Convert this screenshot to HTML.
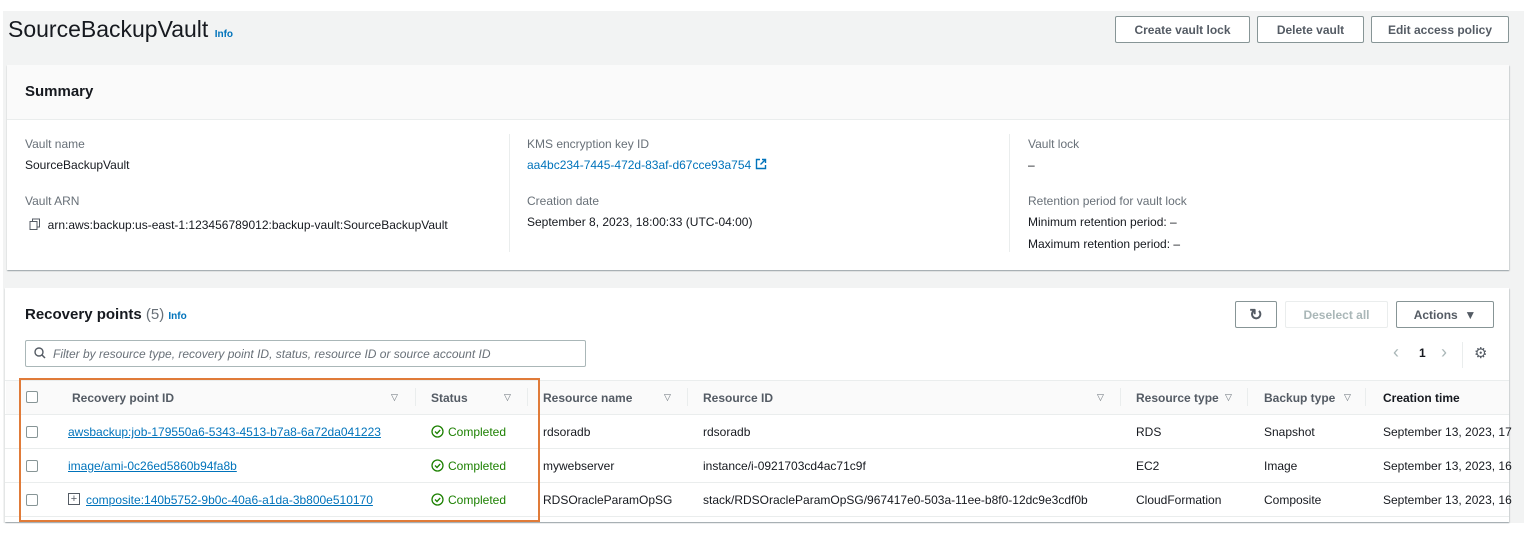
<!DOCTYPE html>
<html><head><meta charset="utf-8"><style>
*{box-sizing:border-box;margin:0;padding:0}
body{width:1524px;height:538px;background:#fff;font-family:"Liberation Sans",sans-serif;color:#16191f;position:relative;overflow:hidden;font-size:12px}
.a{position:absolute;white-space:nowrap}
.bg{position:absolute;left:3px;top:11px;width:1521px;height:512px;background:#f2f3f3}
.card{position:absolute;background:#fff;box-shadow:0 1px 1px rgba(0,28,36,.3),1px 1px 1px rgba(0,28,36,.1)}
.btn{position:absolute;height:27px;border:1px solid #879596;background:#fff;border-radius:2px;font-weight:bold;font-size:12px;color:#545b64;display:flex;align-items:center;justify-content:center}
.lbl{color:#687078;font-size:12px}
.link{color:#0073bb}
.ul{text-decoration:underline}
.th{font-weight:bold;color:#545b64;font-size:12px}
.tri{color:#687078;font-size:9px}
.cb{position:absolute;width:12px;height:12px;border:1px solid #879596;border-radius:2px;background:#fff}
.ok{color:#1d8102}
.row{position:absolute;left:5px;width:1504px;height:1px;background:#eaeded}
.sep{position:absolute;width:1px;height:18px;background:#eaeded}
</style></head><body>
<div class="bg"></div>
<div class="a" style="left:8px;top:16px;font-size:23px;color:#16191f">SourceBackupVault <span class="link" style="font-size:10px;font-weight:bold">Info</span></div>
<div class="btn" style="left:1115px;top:16px;width:135px">Create vault lock</div>
<div class="btn" style="left:1257px;top:16px;width:107px">Delete vault</div>
<div class="btn" style="left:1371px;top:16px;width:138px">Edit access policy</div>

<div class="card" style="left:7px;top:65px;width:1502px;height:205px">
<div style="position:absolute;left:0;top:0;width:100%;height:55px;background:#fafafa;border-bottom:1px solid #eaeded"></div>
<div class="a" style="left:18px;top:18px;font-size:15px;font-weight:bold">Summary</div>
<div style="position:absolute;left:502px;top:69px;width:1px;height:118px;background:#eaeded"></div>
<div style="position:absolute;left:1002px;top:69px;width:1px;height:118px;background:#eaeded"></div>
<div class="a lbl" style="left:18px;top:72px">Vault name</div>
<div class="a" style="left:18px;top:93px">SourceBackupVault</div>
<div class="a lbl" style="left:18px;top:129px">Vault ARN</div>
<div class="a" style="left:22px;top:153px"><svg width="12" height="12" viewBox="0 0 12 12" style="vertical-align:-1px"><rect x="1" y="3.5" width="7" height="8" fill="none" stroke="#545b64"/><path d="M3.5 3.5V1h7v8H8" fill="none" stroke="#545b64"/></svg>&nbsp; arn:aws:backup:us-east-1:123456789012:backup-vault:SourceBackupVault</div>
<div class="a lbl" style="left:520px;top:72px">KMS encryption key ID</div>
<div class="a link" style="left:520px;top:93px">aa4bc234-7445-472d-83af-d67cce93a754 <svg width="12" height="12" viewBox="0 0 12 12" style="vertical-align:-1px"><path d="M5 1.5H1.5v9h9V7M7 1.5h3.5V5M10.5 1.5 5.5 6.5" fill="none" stroke="#0073bb" stroke-width="1.4"/></svg></div>
<div class="a lbl" style="left:520px;top:129px">Creation date</div>
<div class="a" style="left:520px;top:150px">September 8, 2023, 18:00:33 (UTC-04:00)</div>
<div class="a lbl" style="left:1021px;top:72px">Vault lock</div>
<div class="a" style="left:1021px;top:93px">–</div>
<div class="a lbl" style="left:1021px;top:129px">Retention period for vault lock</div>
<div class="a" style="left:1021px;top:150px">Minimum retention period: –</div>
<div class="a" style="left:1021px;top:172px">Maximum retention period: –</div>
</div>

<div class="card" style="left:5px;top:288px;width:1504px;height:234px"></div>
<div class="a" style="left:25px;top:306px;font-size:15px;font-weight:bold">Recovery points <span style="font-weight:normal;color:#687078">(5)</span> <span class="link" style="font-size:10px">Info</span></div>
<div class="btn" style="left:1235px;top:301px;width:42px;font-size:16px;color:#545b64">&#x21bb;</div>
<div class="btn" style="left:1285px;top:301px;width:103px;border-color:#eaeded;color:#aab7b8">Deselect all</div>
<div class="btn" style="left:1396px;top:301px;width:98px">Actions &nbsp;▼</div>
<div class="a" style="left:1393px;top:342px;color:#aab7b8;font-size:18px">‹</div>
<div class="a" style="left:1419px;top:346px;font-weight:bold">1</div>
<div class="a" style="left:1441px;top:342px;color:#aab7b8;font-size:18px">›</div>
<div class="sep" style="left:1462px;top:342px;height:26px"></div>
<div class="a" style="left:1474px;top:344px;font-size:15px;color:#545b64">⚙</div>
<div style="position:absolute;left:25px;top:340px;width:561px;height:27px;border:1px solid #aab7b8;border-radius:2px;background:#fff"></div>
<svg class="a" style="left:34px;top:347px" width="12" height="12" viewBox="0 0 12 12"><circle cx="5" cy="5" r="4" fill="none" stroke="#545b64" stroke-width="1.4"/><path d="M8 8l3 3" stroke="#545b64" stroke-width="1.5"/></svg>
<div class="a" style="left:53px;top:347px;font-style:italic;color:#687078">Filter by resource type, recovery point ID, status, resource ID or source account ID</div>

<div style="position:absolute;left:6px;top:380px;width:1503px;height:34px;background:#fafafa"></div>
<div class="row" style="top:380px"></div>
<div class="row" style="top:414px"></div>
<div class="row" style="top:448px"></div>
<div class="row" style="top:482px"></div>
<div class="row" style="top:516px"></div>
<div class="cb" style="left:26px;top:391px"></div>
<div class="a th" style="left:72px;top:391px">Recovery point ID</div><div class="a tri" style="left:391px;top:392px">▽</div>
<div class="sep" style="left:415px;top:388px"></div>
<div class="a th" style="left:431px;top:391px">Status</div><div class="a tri" style="left:504px;top:392px">▽</div>
<div class="sep" style="left:527px;top:388px"></div>
<div class="a th" style="left:543px;top:391px">Resource name</div><div class="a tri" style="left:664px;top:392px">▽</div>
<div class="sep" style="left:687px;top:388px"></div>
<div class="a th" style="left:703px;top:391px">Resource ID</div><div class="a tri" style="left:1097px;top:392px">▽</div>
<div class="sep" style="left:1120px;top:388px"></div>
<div class="a th" style="left:1136px;top:391px">Resource type</div><div class="a tri" style="left:1225px;top:392px">▽</div>
<div class="sep" style="left:1247px;top:388px"></div>
<div class="a th" style="left:1264px;top:391px">Backup type</div><div class="a tri" style="left:1344px;top:392px">▽</div>
<div class="sep" style="left:1365px;top:388px"></div>
<div class="a th" style="left:1383px;top:391px;color:#16191f">Creation time</div>

<div class="cb" style="left:26px;top:426px"></div>
<div class="a link ul" style="left:68px;top:425px">awsbackup:job-179550a6-5343-4513-b7a8-6a72da041223</div>
<div class="a" style="left:543px;top:425px">rdsoradb</div>
<div class="a" style="left:703px;top:425px">rdsoradb</div>
<div class="a" style="left:1136px;top:425px">RDS</div>
<div class="a" style="left:1264px;top:425px">Snapshot</div>
<div class="a" style="left:1383px;top:425px">September 13, 2023, 17</div>

<div class="cb" style="left:26px;top:460px"></div>
<div class="a link ul" style="left:68px;top:459px">image/ami-0c26ed5860b94fa8b</div>
<div class="a" style="left:543px;top:459px">mywebserver</div>
<div class="a" style="left:703px;top:459px">instance/i-0921703cd4ac71c9f</div>
<div class="a" style="left:1136px;top:459px">EC2</div>
<div class="a" style="left:1264px;top:459px">Image</div>
<div class="a" style="left:1383px;top:459px">September 13, 2023, 16</div>

<div class="cb" style="left:26px;top:494px"></div>
<div class="a" style="left:68px;top:493px;width:12px;height:12px;border:1px solid #545b64;font-size:11px;line-height:10px;text-align:center;color:#545b64">+</div>
<div class="a link ul" style="left:86px;top:493px">composite:140b5752-9b0c-40a6-a1da-3b800e510170</div>
<div class="a" style="left:543px;top:493px">RDSOracleParamOpSG</div>
<div class="a" style="left:703px;top:493px">stack/RDSOracleParamOpSG/967417e0-503a-11ee-b8f0-12dc9e3cdf0b</div>
<div class="a" style="left:1136px;top:493px">CloudFormation</div>
<div class="a" style="left:1264px;top:493px">Composite</div>
<div class="a" style="left:1383px;top:493px">September 13, 2023, 16</div>

<svg class="a" style="left:431px;top:425px" width="13" height="13" viewBox="0 0 13 13"><circle cx="6.5" cy="6.5" r="5.5" fill="#fff" stroke="#1d8102" stroke-width="1.3"/><path d="M4 6.5l2 2 3.2-3.5" fill="none" stroke="#1d8102" stroke-width="1.3"/></svg>
<div class="a ok" style="left:448px;top:425px">Completed</div>
<svg class="a" style="left:431px;top:459px" width="13" height="13" viewBox="0 0 13 13"><circle cx="6.5" cy="6.5" r="5.5" fill="#fff" stroke="#1d8102" stroke-width="1.3"/><path d="M4 6.5l2 2 3.2-3.5" fill="none" stroke="#1d8102" stroke-width="1.3"/></svg>
<div class="a ok" style="left:448px;top:459px">Completed</div>
<svg class="a" style="left:431px;top:493px" width="13" height="13" viewBox="0 0 13 13"><circle cx="6.5" cy="6.5" r="5.5" fill="#fff" stroke="#1d8102" stroke-width="1.3"/><path d="M4 6.5l2 2 3.2-3.5" fill="none" stroke="#1d8102" stroke-width="1.3"/></svg>
<div class="a ok" style="left:448px;top:493px">Completed</div>

<div style="position:absolute;left:19px;top:378px;width:521px;height:144px;border:2px solid #e07b39"></div>
</body></html>
